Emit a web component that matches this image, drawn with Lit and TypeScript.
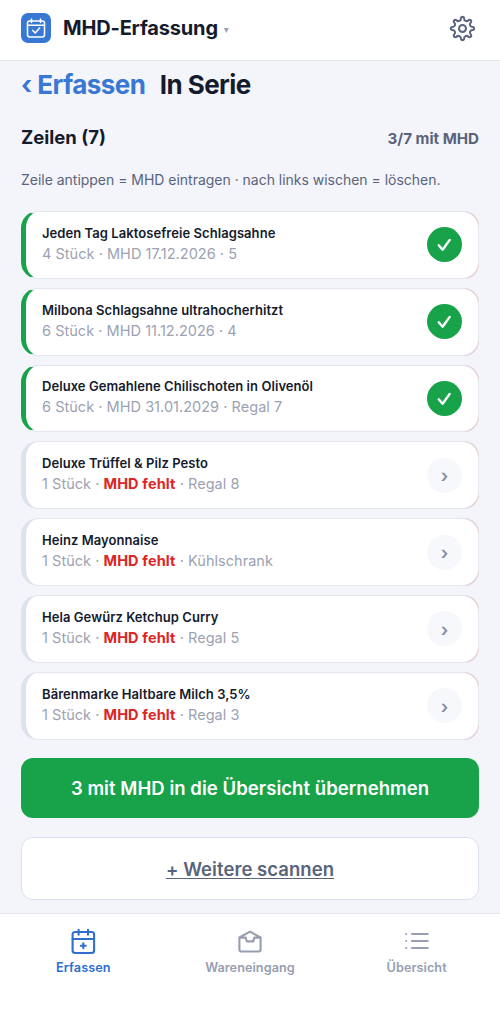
import { LitElement, html, css, svg } from "lit";
import { customElement } from "lit/decorators.js";

interface Row { name: string; qty: number; mhd?: string; place: string; }

const ROWS: Row[] = [
  { name: "Jeden Tag Laktosefreie Schlagsahne", qty: 4, mhd: "17.12.2026", place: "5" },
  { name: "Milbona Schlagsahne ultrahocherhitzt", qty: 6, mhd: "11.12.2026", place: "4" },
  { name: "Deluxe Gemahlene Chilischoten in Olivenöl", qty: 6, mhd: "31.01.2029", place: "Regal 7" },
  { name: "Deluxe Trüffel & Pilz Pesto", qty: 1, place: "Regal 8" },
  { name: "Heinz Mayonnaise", qty: 1, place: "Kühlschrank" },
  { name: "Hela Gewürz Ketchup Curry", qty: 1, place: "Regal 5" },
  { name: "Bärenmarke Haltbare Milch 3,5%", qty: 1, place: "Regal 3" },
];

// Rounded eight-tooth gear outline.
const gearPath = (() => {
  const n = 8;
  const p = (r: number, deg: number) => {
    const a = ((deg - 90) * Math.PI) / 180;
    return `${(12 + r * Math.cos(a)).toFixed(2)} ${(12 + r * Math.sin(a)).toFixed(2)}`;
  };
  let d = "";
  for (let i = 0; i < n; i++) {
    const c = (i * 360) / n;
    d += `${i ? "L" : "M"}${p(9.1, c - 9)}`;
    d += `C${p(10.9, c - 8)} ${p(10.9, c + 8)} ${p(9.1, c + 9)}`;
    d += `C${p(6.9, c + 12)} ${p(6.9, c + 33)} ${p(9.1, c + 36)}`;
  }
  return d + "Z";
})();

@customElement("app-root")
export class AppRoot extends LitElement {
  static styles = css`
    :host { display: flex; flex-direction: column; height: 1012px; overflow: hidden; box-sizing: border-box;
      background: #f4f5fa; color: #141b2d; font-family: Inter, "Liberation Sans", sans-serif; }
    * { box-sizing: border-box; }
    svg { display: block; fill: none; stroke: currentColor; stroke-linecap: round; stroke-linejoin: round; }
    header { height: 61px; flex: none; background: #fff; border-bottom: 1px solid #e4e7f0;
      display: flex; align-items: center; padding: 0 24px 4px 21px; }
    .logo { width: 30px; height: 30px; border-radius: 7px; background: #3878d4; color: #fff;
      display: grid; place-items: center; margin-right: 12px; }
    .app { font-size: 20px; font-weight: 700; line-height: 24px; letter-spacing: -0.18px; white-space: nowrap; }
    .caret { width: 5px; height: 5px; margin: 5px auto 0 6px; background: #9aa3b5; clip-path: polygon(0 0, 100% 0, 50% 100%); }
    .gear { color: #59647c; }
    main { flex: 1; padding: 0 21px; display: flex; flex-direction: column; }
    .title { display: flex; gap: 14.5px; margin-top: 8px; font-size: 26px; line-height: 32px; font-weight: 700; letter-spacing: -0.57px; white-space: nowrap; }
    .back { color: #3878d4; }
    .head { display: flex; justify-content: space-between; align-items: center; margin-top: 24px; height: 24px; }
    .lines { font-size: 18.5px; font-weight: 700; }
    .count { font-size: 15.15px; font-weight: 700; color: #59647c; padding-top: 2px; }
    .hint { margin-top: 21px; font-size: 14px; line-height: 20px; letter-spacing: -0.02px; color: #59647c; white-space: nowrap; }
    .list { margin-top: 21px; display: flex; flex-direction: column; gap: 9px; }
    .slot { height: 67.8px; border-radius: 15.5px; background: linear-gradient(90deg, transparent 90%, #e9b6bf 97%); }
    .row { height: 67.8px; border: 1px solid #e4e7f0; border-left: 5px solid #dce3ed; border-radius: 17px; background: #fff;
      display: flex; align-items: center; justify-content: space-between; padding: 0 16px; }
    .row.done { border-left-color: #18a34a; }
    .text { padding-bottom: 2px; }
    .name { font-size: 13px; line-height: 18px; font-weight: 600; letter-spacing: 0.06px; white-space: nowrap; }
    .sub { font-size: 14.5px; line-height: 20px; margin-top: 2px; letter-spacing: 0.03px; color: #9ca2b3; white-space: nowrap; }
    .sub b { color: #dc2626; font-weight: 700; letter-spacing: 0.14px; }
    .state { width: 35px; height: 35px; border-radius: 50%; background: #f7f8fb; color: #858da0; display: grid; place-items: center; font-size: 18px; font-weight: 600; line-height: 1; padding-top: 2px; }
    .done .state { background: #18a34a; color: #fff; padding-top: 0; }
    .btn { border-radius: 12px; display: flex; align-items: center; justify-content: center; font-size: 18.5px; font-weight: 600; letter-spacing: 0.05px; white-space: nowrap; }
    .primary { height: 60px; margin-top: 18.4px; background: #18a34a; color: #fff; }
    .more { height: 63px; margin-top: 19px; background: #fff; border: 1.5px solid #dbe1ed; color: #59647c; text-decoration: underline; text-decoration-thickness: 1px; text-underline-offset: 2px; padding-top: 1px; }
    nav { height: 99px; flex: none; background: #fff; border-top: 1px solid #e4e7f0; display: grid; grid-template-columns: repeat(3, 1fr); }
    .tab { display: flex; flex-direction: column; align-items: center; padding-top: 13px; gap: 4px; color: #989eaf; font-size: 12.7px; line-height: 17px; font-weight: 600; letter-spacing: 0.04px; }
    .tab.on { color: #2f6fcf; }
  `;

  private row(r: Row) {
    return html`<div class="slot"><div class="row ${r.mhd ? "done" : ""}">
      <div class="text">
        <div class="name">${r.name}</div>
        <div class="sub">${r.qty} Stück · ${r.mhd ? html`MHD ${r.mhd}` : html`<b>MHD fehlt</b>`} · ${r.place}</div>
      </div>
      <div class="state">${r.mhd
        ? html`<svg width="17" height="17" viewBox="0 0 17 17" stroke-width="2.4"><path d="M2.7 9.3 6.6 13.7 13.7 3.9"/></svg>`
        : "›"}</div>
    </div></div>`;
  }

  private icon(body: unknown) {
    return html`<svg width="28" height="28" viewBox="0 0 28 28" stroke-width="2.1">${body}</svg>`;
  }

  render() {
    return html`
      <header>
        <div class="logo"><svg width="20" height="20" viewBox="0 0 20 20" stroke-width="1.5">
          <rect x="1.5" y="3" width="17" height="16" rx="2.2"/><path d="M1.5 7.2h17M5.5 1v3.5M14.5 1v3.5M6.8 12.4l2.4 2.5 4.4-5"/></svg></div>
        <div class="app">MHD-Erfassung</div>
        <div class="caret"></div>
        <svg class="gear" width="27" height="27" viewBox="0 0 24 24" stroke-width="1.8"><path d=${gearPath}/><circle cx="12" cy="12" r="3.1"/></svg>
      </header>
      <main>
        <div class="title"><span class="back">‹ Erfassen</span><span>In Serie</span></div>
        <div class="head"><span class="lines">Zeilen (7)</span><span class="count">3/7 mit MHD</span></div>
        <div class="hint">Zeile antippen = MHD eintragen · nach links wischen = löschen.</div>
        <div class="list">${ROWS.map((r) => this.row(r))}</div>
        <div class="btn primary">3 mit MHD in die Übersicht übernehmen</div>
        <div class="btn more">+ Weitere scannen</div>
      </main>
      <nav>
        <div class="tab on">${this.icon(svg`<rect x="3.6" y="5" width="21.5" height="21" rx="2.5"/><path d="M3.6 12h21.5M9.6 2.8v5M19 2.8v5M14.3 16.2v5M11.8 18.7h5"/>`)}Erfassen</div>
        <div class="tab">${this.icon(svg`<path d="M3.4 10.5 14 4.7l10.6 5.8v12a2 2 0 0 1-2 2H5.4a2 2 0 0 1-2-2zM3.6 10.6h6l1.2 3.8h6.4l1.2-3.8h6"/>`)}Wareneingang</div>
        <div class="tab">${this.icon(svg`<path d="M9 7h15.7M9 14h15.7M9 21h15.7M3.2 7h.01M3.2 14h.01M3.2 21h.01"/>`)}Übersicht</div>
      </nav>`;
  }
}
